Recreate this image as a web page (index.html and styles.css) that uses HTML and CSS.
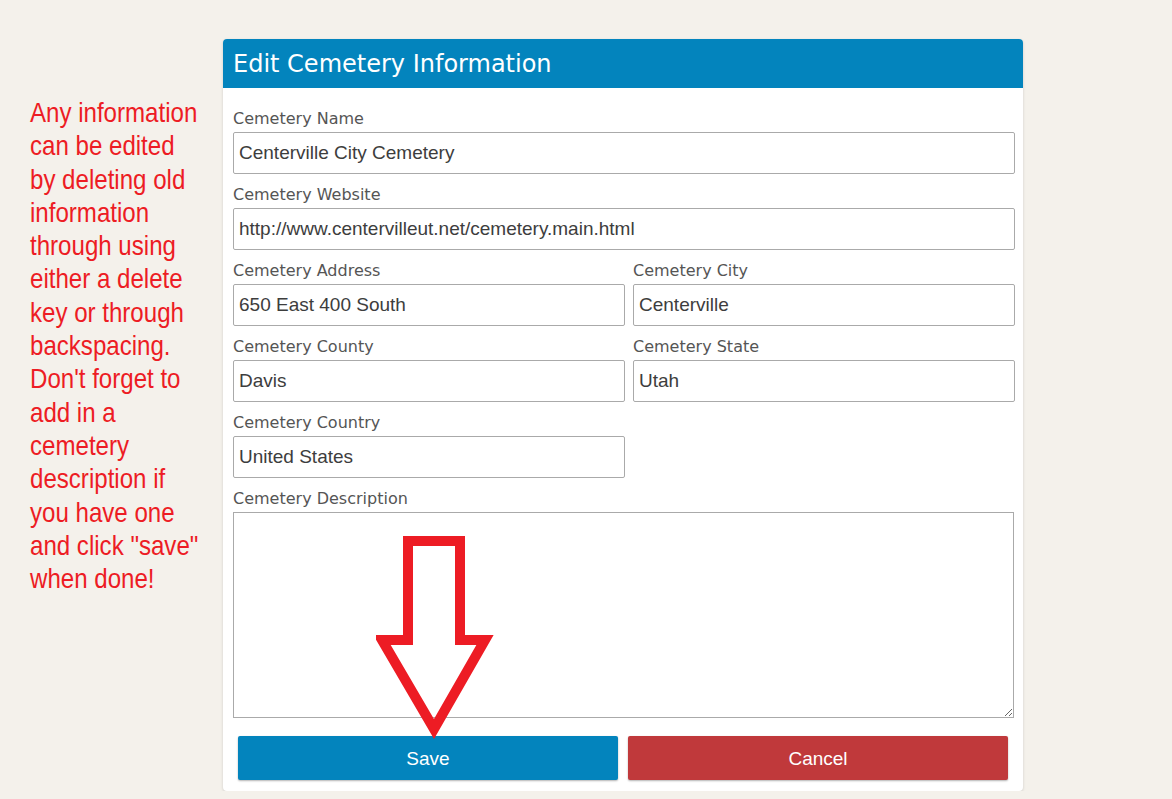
FILE: index.html
```html
<!DOCTYPE html>
<html lang="en">
<head>
    <meta charset="UTF-8">
    <meta name="viewport" content="width=device-width, initial-scale=1.0">
    <title>Edit Cemetery Information</title>
    <link rel="stylesheet" href="styles.css">
</head>
<body>
    <div class="page">
        <p class="note">Any information<br>can be edited<br>by deleting old<br>information<br>through using<br>either a delete<br>key or through<br>backspacing.<br>Don't forget to<br>add in a<br>cemetery<br>description if<br>you have one<br>and click "save"<br>when done!</p>

        <div class="card">
            <div class="card-header">Edit Cemetery Information</div>
            <form class="card-body">
                <div class="field">
                    <label for="name">Cemetery Name</label>
                    <input type="text" id="name" value="Centerville City Cemetery">
                </div>
                <div class="field">
                    <label for="website">Cemetery Website</label>
                    <input type="text" id="website" value="http://www.centervilleut.net/cemetery.main.html">
                </div>
                <div class="row">
                    <div class="field">
                        <label for="address">Cemetery Address</label>
                        <input type="text" id="address" value="650 East 400 South">
                    </div>
                    <div class="field">
                        <label for="city">Cemetery City</label>
                        <input type="text" id="city" value="Centerville">
                    </div>
                </div>
                <div class="row">
                    <div class="field">
                        <label for="county">Cemetery County</label>
                        <input type="text" id="county" value="Davis">
                    </div>
                    <div class="field">
                        <label for="state">Cemetery State</label>
                        <input type="text" id="state" value="Utah">
                    </div>
                </div>
                <div class="row">
                    <div class="field">
                        <label for="country">Cemetery Country</label>
                        <input type="text" id="country" value="United States">
                    </div>
                </div>
                <div class="field">
                    <label for="description">Cemetery Description</label>
                    <textarea id="description"></textarea>
                </div>
                <div class="actions">
                    <button type="submit" class="btn btn-save">Save</button>
                    <button type="button" class="btn btn-cancel">Cancel</button>
                </div>
            </form>

            <svg class="arrow" width="130" height="210" viewBox="0 0 130 210">
                <polygon points="32,5 84,5 84,104 109,104 58,193 6,104 32,104" fill="none" stroke="#ed1c24" stroke-width="10" stroke-linejoin="miter"/>
            </svg>
        </div>
    </div>
</body>
</html>
```

FILE: styles.css
```css
body {
    margin: 0;
    padding: 0;
    background-color: #f4f1eb;
    font-family: "DejaVu Sans", Verdana, sans-serif;
}

.page {
    display: flex;
    align-items: flex-start;
    padding-top: 39px;
}

.note {
    width: 193px;
    margin: 57px 0 0 30px;
    font-family: "Liberation Sans", Arial, sans-serif;
    font-size: 28px;
    line-height: 33.3px;
    color: #ed1c24;
    white-space: nowrap;
    transform: scaleX(0.86);
    transform-origin: left top;
}

.card {
    position: relative;
    width: 800px;
    background: #fff;
    border-radius: 4px;
    box-shadow: 0 1px 3px rgba(0, 0, 0, 0.15);
    overflow: hidden;
}

.card-header {
    height: 49px;
    line-height: 51px;
    padding: 0 10px;
    background-color: #0384bd;
    color: #fff;
    font-size: 24px;
}

.card-body {
    padding: 20px 8px 11px 10px;
    margin: 0;
}

.field {
    margin-bottom: 10px;
}

.field label {
    display: block;
    height: 20px;
    line-height: 22px;
    margin-bottom: 4px;
    font-size: 16px;
    color: #555;
}

.field input, .field textarea {
    display: block;
    box-sizing: border-box;
    width: 100%;
    margin: 0;
    border: 1px solid #aaa;
    border-radius: 2px;
    background: #fff;
    font-family: "Liberation Sans", Arial, sans-serif;
    font-size: 19px;
    color: #3d3d3d;
}

.field input {
    height: 42px;
    padding: 0 5px;
}

.field textarea {
    width: 781px;
    height: 206px;
    border-radius: 0;
    resize: vertical;
}

.row {
    display: grid;
    grid-template-columns: 392px 1fr;
    column-gap: 8px;
}

.actions {
    display: grid;
    grid-template-columns: 380px 380px;
    column-gap: 10px;
    padding: 0 5px;
    margin-top: 18px;
}

.btn {
    height: 44px;
    padding-top: 3px;
    border: none;
    border-radius: 2px;
    color: #fff;
    font-family: "Liberation Sans", Arial, sans-serif;
    font-size: 19px;
    box-shadow: 0 1px 2px rgba(0, 0, 0, 0.3);
    cursor: pointer;
}

.btn-save {
    background-color: #0384bd;
}

.btn-cancel {
    background-color: #c0393b;
}

.arrow {
    position: absolute;
    left: 153px;
    top: 497px;
}
```
